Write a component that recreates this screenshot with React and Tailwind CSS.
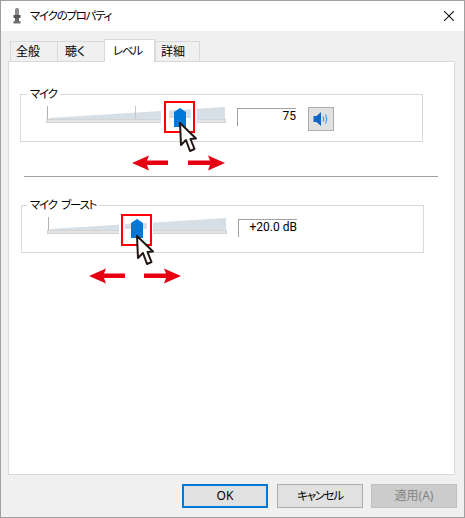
const Cursor = ({ className }) => (
  <svg className={className} width="20" height="32" viewBox="0 0 20 32">
    <path
      d="M2 1 L3 23 L8 18 L12 29 L16.500 27 L12.500 17 L18 16.500 Z"
      fill="#fff"
      stroke="#231815"
      strokeWidth="2"
      strokeLinejoin="round"
    />
  </svg>
);

const ArrowLeft = ({ className }) => (
  <svg className={className} width="37" height="16" viewBox="0 0 37 16">
    <path d="M0 8 L17 0.500 L15 5.500 L36 5.500 L36 10 L15 10 L17 15.500 Z" fill="#e60012" />
  </svg>
);

const ArrowRight = ({ className }) => (
  <svg className={className} width="37" height="16" viewBox="0 0 37 16">
    <path d="M37 8 L20 0.500 L22 5.500 L0 5.500 L0 10 L22 10 L20 15.500 Z" fill="#e60012" />
  </svg>
);

const Speaker = () => (
  <svg width="16" height="16" viewBox="0 0 16 16">
    <path d="M0.500 5 H3.500 L8 1 V15 L3.500 11 H0.500 Z" fill="#0f66c4" />
    <path d="M10 5.500 Q11.500 8 10 10.500" fill="none" stroke="#2f86dc" strokeWidth="1" />
    <path d="M12.500 3.500 Q15 8 12.500 12.500" fill="none" stroke="#2f86dc" strokeWidth="1" />
  </svg>
);

// slider with the red marker on top, x values are relative to the slider's left edge
function Slider({ thumbX, boxX, boxTop, gapFrom, gapTo, innerFrom, innerTo }) {
  const yAt = (x) => 12 - ((x - 3) / 176) * 11;
  return (
    <div className="relative w-[180px] h-[17px] shrink-0">
      <svg className="block" width="180" height="13" viewBox="0 0 180 13">
        <path d="M3 12 L179 1 V13 H3 Z" fill="#d6dee6" />
        <rect x="1" y="0" width="1" height="13" fill="#b0b0b0" />
        <rect x="89" y="0" width="1" height="13" fill="#c4c8cc" />
      </svg>
      <div className="h-[4px] bg-[#e4e4e4] border border-[#d4d4d4]" />
      <svg className="absolute left-0 -top-[5px]" width="180" height="32" viewBox="0 0 180 32">
        <rect x={gapFrom} y="0" width={gapTo - gapFrom} height="32" fill="#fff" />
        <path
          d={`M${innerFrom} ${yAt(innerFrom) + 5} L${innerTo} ${yAt(innerTo) + 5} V17 H${innerFrom} Z`}
          fill="#d6dee6"
        />
        <path
          d={`M${thumbX} 11 L${thumbX + 6} 7 L${thumbX + 12} 11 V26 H${thumbX} Z`}
          fill="#0078d7"
        />
      </svg>
      <div
        className="absolute w-[31px] h-[32px] border-2 border-[#ff0000]"
        style={{ left: boxX, top: boxTop }}
      />
    </div>
  );
}

function EditBox({ value }) {
  return (
    <div className="w-[59px] h-[18px] mt-[2px] ml-[11px] border-t border-l border-[#a0a0a0] text-right text-[12px] leading-[15px] text-black shrink-0 font-['Roboto',sans-serif]">
      {value}
    </div>
  );
}

function Tab({ label, width, active, pad, kana }) {
  const textClass = kana ? 'text-[11.5px] tracking-[-1.3px]' : 'text-[12px]';
  if (active) {
    return (
      <div
        className={`relative z-10 h-[23px] border border-b-0 border-[#d9d9d9] bg-white leading-[22px] ${textClass}`}
        style={{ width, paddingLeft: pad }}
      >
        {label}
      </div>
    );
  }
  return (
    <div
      className={`mt-[2px] h-[20px] border border-b-0 border-[#d9d9d9] bg-[#f0f0f0] leading-[20px] -mr-px ${textClass}`}
      style={{ width: width + 1, paddingLeft: pad }}
    >
      {label}
    </div>
  );
}

export default function App() {
  return (
    <div className="w-[465px] h-[518px] flex flex-col border border-[#a0a0a0] bg-[#f0f0f0] text-black font-['Noto_Sans','Noto_Sans_CJK_JP',sans-serif] [font-feature-settings:'palt'] overflow-hidden">
      {/* title bar */}
      <div className="h-[30px] bg-white flex items-center shrink-0">
        <svg className="ml-[12px]" width="8" height="16" viewBox="0 0 8 16">
          <rect x="2" y="0" width="4" height="8" rx="1.500" fill="#8a8a8a" />
          <rect x="0.500" y="7" width="7" height="3" fill="#555" />
          <rect x="2" y="10" width="4" height="3" fill="#666" />
          <rect x="0.500" y="13" width="7" height="2.500" fill="#707070" />
        </svg>
        <span className="ml-[9px] text-[11.5px] tracking-[-1.3px]">マイクのプロパティ</span>
        <svg className="ml-auto mr-[10px]" width="10" height="10" viewBox="0 0 10 10">
          <path d="M0 0 L10 10 M10 0 L0 10" stroke="#111" strokeWidth="1.100" />
        </svg>
      </div>

      {/* tabs */}
      <div className="flex pl-[2px] ml-[7px] mt-[8px] items-start h-[22px] shrink-0">
        <Tab label="全般" width={47} pad={5} />
        <Tab label="聴く" width={47} pad={7} />
        <Tab label="レベル" width={51} pad={8} active kana />
        <Tab label="詳細" width={44} pad={5} />
      </div>

      {/* page */}
      <div className="ml-[7px] w-[447px] h-[414px] bg-white border border-[#d9d9d9] shrink-0 pl-[11px] pt-[32px]">
        {/* mic level */}
        <div className="relative w-[403px] h-[48px] border border-[#d9d9d9]">
          <span className="absolute left-[6px] -top-[9px] bg-white px-[3px] text-[11.5px] tracking-[-1.3px] leading-[16px]">マイク</span>
          <div className="flex items-start pl-[25px] pt-[11px]">
            <Slider thumbX={128} boxX={118} boxTop={-5} gapFrom={115} gapTo={151} innerFrom={123} innerTo={145} />
            <EditBox value="75" />
            <div className="ml-[12px] mt-[1px] w-[26px] h-[24px] bg-[#e1e1e1] border border-[#adadad] flex items-center justify-center shrink-0">
              <Speaker />
            </div>
          </div>
          <Cursor className="absolute left-[157px] top-[27px]" />
          <ArrowLeft className="absolute left-[111px] top-[60px]" />
          <ArrowRight className="absolute left-[167px] top-[60px]" />
        </div>

        <div className="ml-[4px] mt-[34px] w-[414px] h-px bg-[#a0a0a0]" />

        {/* mic boost */}
        <div className="relative ml-[1px] mt-[28px] w-[403px] h-[48px] border border-[#d9d9d9]">
          <span className="absolute left-[5px] -top-[9px] bg-white px-[3px] text-[11.5px] tracking-[-1.3px] [word-spacing:3px] leading-[16px]">マイク ブースト</span>
          <div className="flex items-start pl-[25px] pt-[11px]">
            <Slider thumbX={84} boxX={74} boxTop={-3} gapFrom={72} gapTo={106} innerFrom={78} innerTo={100} />
            <EditBox value="+20.0 dB" />
          </div>
          <Cursor className="absolute left-[113px] top-[29px]" />
          <ArrowLeft className="absolute left-[67px] top-[62px]" />
          <ArrowRight className="absolute left-[122px] top-[62px]" />
        </div>
      </div>

      {/* buttons */}
      <div className="flex pl-[181px] pt-[9px]">
        <button className="w-[86px] h-[24px] bg-[#e1e1e1] border-2 border-[#0078d7] text-[12px] leading-none">OK</button>
        <button className="ml-[9px] w-[86px] h-[24px] bg-[#e1e1e1] border border-[#adadad] text-[11.5px] tracking-[-1.3px] leading-none">キャンセル</button>
        <button className="ml-[8px] w-[86px] h-[24px] bg-[#cccccc] border border-[#bfbfbf] text-[#838383] text-[12px] leading-none">適用(A)</button>
      </div>
    </div>
  );
}
